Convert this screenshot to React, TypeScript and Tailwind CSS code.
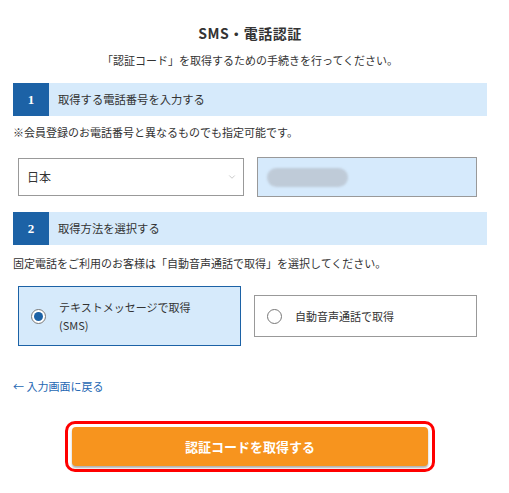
import { ChevronDown } from "lucide-react";

const font = { fontFamily: '"Noto Sans CJK JP", "Noto Sans", sans-serif' };

const StepHeader = ({ num, label }: { num: string; label: string }) => (
  <div className="flex h-[33px] bg-[#d6eafb]">
    <div className="flex w-[36px] items-center justify-center bg-[#1c62a6] text-[13px] font-bold text-white [font-family:'Liberation_Serif',serif]">
      {num}
    </div>
    <div className="flex items-center pl-[9px] text-[11.3px] text-[#333]">{label}</div>
  </div>
);

const Radio = ({ checked }: { checked?: boolean }) => (
  <span className="flex h-[15px] w-[15px] shrink-0 items-center justify-center rounded-full border border-[#777] bg-white">
    {checked && <span className="h-[9px] w-[9px] rounded-full bg-[#1c62a6]" />}
  </span>
);

export default function App() {
  return (
    <div className="min-h-[493px] bg-white text-[#333]" style={font}>
      <div className="ml-[13px] flex w-[474px] flex-col pt-[23px]">
        <h1 className="h-[20px] text-center text-[14px] font-bold leading-[20px] tracking-[0.5px]">
          SMS・電話認証
        </h1>
        <p className="mt-[8px] h-[18px] text-center text-[11px] leading-[18px]">
          「認証コード」を取得するための手続きを行ってください。
        </p>

        {/* Step 1 */}
        <div className="mt-[14px]">
          <StepHeader num="1" label="取得する電話番号を入力する" />
        </div>
        <p className="mt-[7px] h-[18px] text-[11px] leading-[18px]">
          ※会員登録のお電話番号と異なるものでも指定可能です。
        </p>
        <div className="mt-[16px] flex h-[40px] items-center gap-[13px] pl-[5px] pr-[10px]">
          <div className="flex h-[38px] flex-1 items-center justify-between border border-[#999] bg-white pl-[8px] pr-[6px] text-[12px]">
            <span>日本</span>
            <ChevronDown className="h-[10px] w-[10px] text-[#aaa]" strokeWidth={1.5} />
          </div>
          <div className="flex h-[40px] flex-1 items-center border border-[#999] bg-[#d6eafc] pl-[9px]">
            <div className="h-[19px] w-[81px] rounded-full bg-[#bfcbd8] blur-[1px]" />
          </div>
        </div>

        {/* Step 2 */}
        <div className="mt-[15px]">
          <StepHeader num="2" label="取得方法を選択する" />
        </div>
        <p className="mt-[9px] h-[18px] text-[11px] leading-[18px]">
          固定電話をご利用のお客様は「自動音声通話で取得」を選択してください。
        </p>
        <div className="mt-[14px] flex h-[60px] items-center gap-[13px] pl-[5px] pr-[10px]">
          <div className="flex h-[60px] flex-1 items-center gap-[13px] border border-[#1c62a6] bg-[#d6eafb] pl-[12px] text-[11px] leading-[18px]">
            <Radio checked />
            <span>
              テキストメッセージで取得
              <br />
              (SMS)
            </span>
          </div>
          <div className="flex h-[42px] flex-1 items-center gap-[13px] border border-[#999] bg-white pl-[12px] text-[11px]">
            <Radio />
            <span>自動音声通話で取得</span>
          </div>
        </div>

        <a className="mt-[31px] h-[18px] text-[11px] leading-[18px] text-[#2567b3]">← 入力画面に戻る</a>

        <div className="mt-[26px] flex justify-center">
          <div className="rounded-[10px] border-[3px] border-[#ff0000] px-[4px] py-[3px]">
            <button className="flex h-[39px] w-[356px] items-center justify-center rounded-[4px] bg-[#f7941e] text-[13px] font-bold text-white shadow-[0_2px_2px_rgba(0,0,0,0.3)]">
              認証コードを取得する
            </button>
          </div>
        </div>
      </div>
    </div>
  );
}
